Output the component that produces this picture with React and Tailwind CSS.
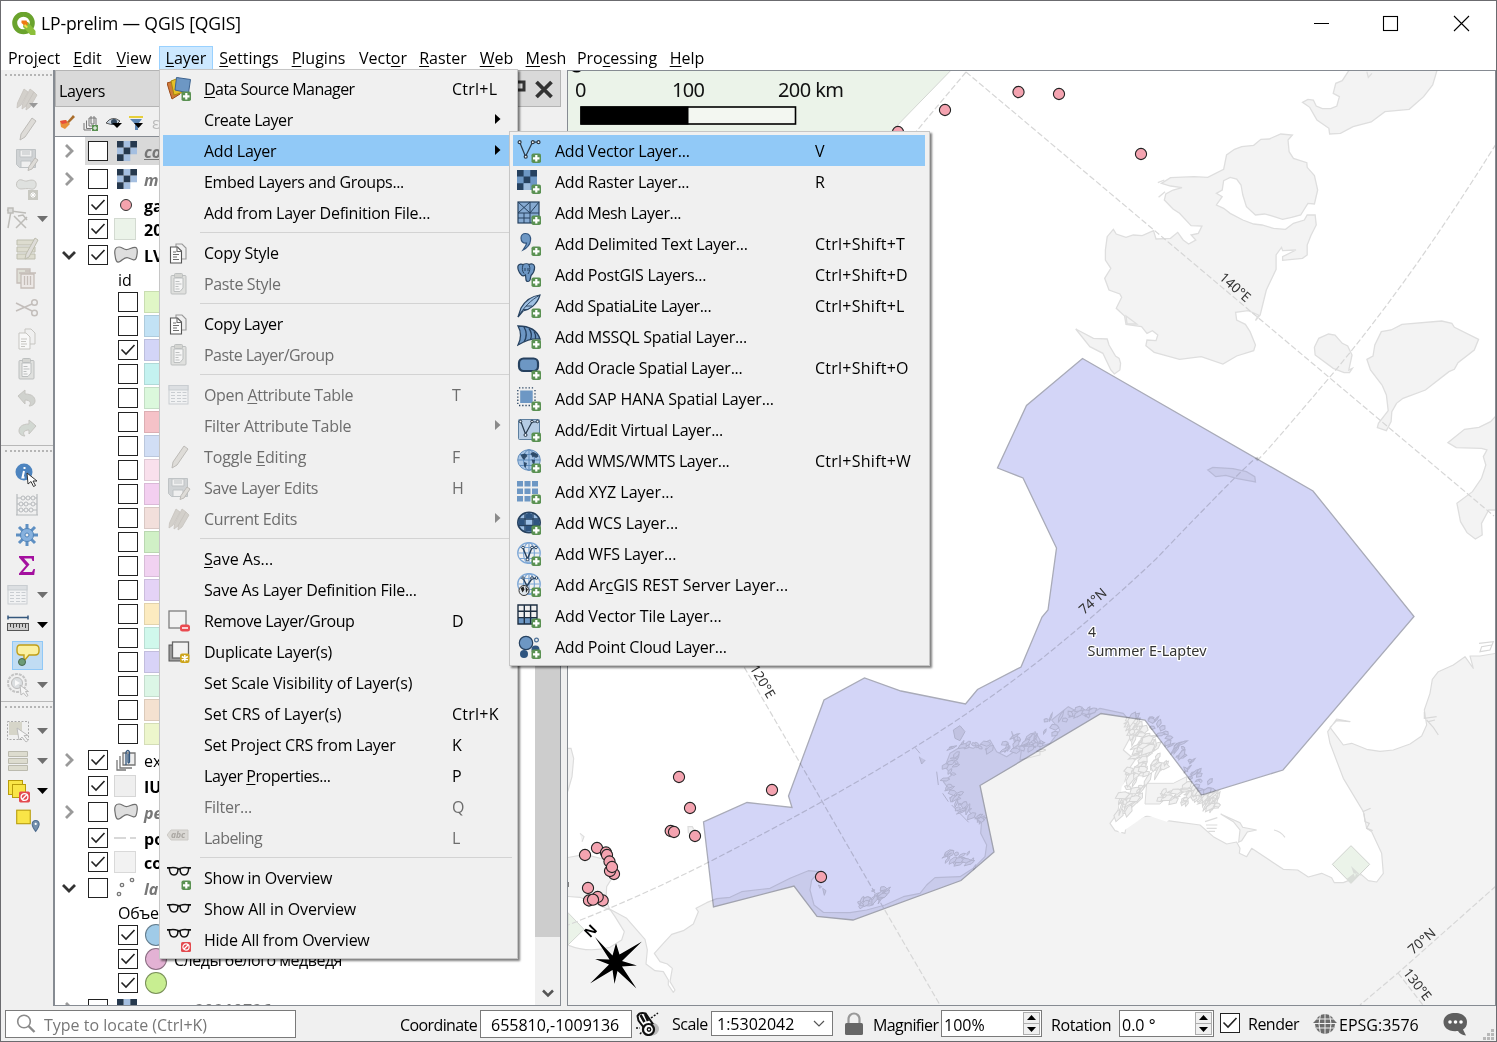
import React from "react";

/* ---------- helpers ---------- */

// "_X" marks the underlined accelerator letter
function Label({ text }) {
  const i = text.indexOf("_");
  if (i < 0) return <span>{text}</span>;
  return (
    <span>
      {text.slice(0, i)}
      <span className="underline decoration-1 underline-offset-2">{text[i + 1]}</span>
      {text.slice(i + 2)}
    </span>
  );
}

function Svg({ size = 24, children, className = "" }) {
  return (
    <svg width={size} height={size} viewBox="0 0 24 24" fill="none" className={"shrink-0 " + className}>
      {children}
    </svg>
  );
}

const Plus = () => (
  <g>
    <rect x="14.500" y="14.500" width="9.500" height="9.500" rx="1.800" fill="#5a9152" />
    <path d="M19.300 16v6.500M16 19.300h6.500" stroke="#fff" strokeWidth="2.200" />
  </g>
);

const NoEntry = ({ x = 15, y = 15, s = 10 }) => (
  <g transform={`translate(${x} ${y}) scale(${s / 10})`}>
    <rect width="10" height="10" rx="1.5" fill="#e34a4f" />
    <circle cx="5" cy="5" r="3.1" stroke="#fff" strokeWidth="1.2" />
    <path d="M3 7l4-4" stroke="#fff" strokeWidth="1.2" />
  </g>
);

/* ---------- icons ---------- */

const B = "#6d97c4";
const D = "#26415f";

const globeLines = (c, w = 1) => (
  <g stroke={c} strokeWidth={w}>
    <ellipse cx="12" cy="11" rx="11.3" ry="10.3" />
    <ellipse cx="12" cy="11" rx="5.5" ry="10.3" />
    <path d="M12 1v20M1 11h22M3 5.5h18M3 16.5h18" />
  </g>
);

const vShape = (c) => (
  <g stroke={c} strokeWidth="1.2">
    <path d="M3 4l5.5 13.5L15.500 3.200h5" />
    <g fill="#f4f4f4">
      <circle cx="2.600" cy="3.200" r="1.500" />
      <circle cx="8.700" cy="17.700" r="1.500" />
      <circle cx="15.800" cy="3.200" r="1.500" />
      <circle cx="21.500" cy="3.200" r="1.500" />
    </g>
  </g>
);

const Glasses = () => (
  <g stroke="#111" strokeWidth="1.500">
    <path d="M0 1.800h4M20 1.800h4" strokeWidth="1.800" />
    <path d="M10.800 3.600q1.200-1.400 2.400 0" strokeWidth="1.800" />
    <path d="M2.300 2Q6.500 .8 10.800 2.400C11.300 6 9.800 9 6.900 9S2.400 6 2.300 2zM21.700 2Q17.500 .8 13.200 2.400C12.700 6 14.200 9 17.100 9S21.600 6 21.700 2z" fill="#f4f4f4" />
  </g>
);

const pencil = (
  <path d="M17 1l4 3L10 20l-5 3 1-6z" fill="#dedcd8" stroke="#bdbbb7" />
);

const icons = {
  dsm: (
    <>
      <path d="M0 6l7-2 6 13-8 5-2-6z" fill="#cf7a3a" stroke="#9c4a18" />
      <path d="M4 4l8-3 5 14-10 3z" fill="#e6c028" stroke="#a98a0c" />
      <path d="M9.500 .5L23.500 2.500l-2 13.500L8 13z" fill={B} stroke="#3d638f" />
      <Plus />
    </>
  ),
  copy: (
    <g stroke="#6c6c6c" strokeWidth="1.1">
      <path d="M9 3h6l4 4v11H9z" fill="#efefef" stroke="#999" />
      <path d="M3.500 6h7l4 4v12h-11z" fill="#fcfcfc" stroke="#555" />
      <path d="M10 6v4.500h4.500M6 11h3M6 13.500h6M6 16h4M6 18.500h6" />
    </g>
  ),
  paste: (
    <g stroke="#bcbfbf">
      <rect x="4" y="3.500" width="15" height="18.500" rx="1" fill="#dfe0de" />
      <path d="M7 6h9v10l-3 3.500H7z" fill="#f5f5f5" />
      <rect x="7.500" y="1.500" width="8" height="4" rx="1" fill="#d4d5d2" />
      <path d="M8.500 9.500h4M8.500 12h6M8.500 14.500h3M8.500 17h4" />
    </g>
  ),
  table: (
    <g stroke="#c9cdd1">
      <rect x="2" y="2.500" width="19" height="18.500" fill="#f1f2f3" />
      <rect x="2" y="2.500" width="19" height="4.500" fill="#dcdfe2" />
      <path d="M4 9.500h4M10 9.500h4M15.500 9.500h4M4 12.500h4M10 12.500h4M15.500 12.500h4M4 15.500h4M10 15.500h4M15.500 15.500h4M4 18.500h4M10 18.500h4M15.500 18.500h4" />
    </g>
  ),
  pencil,
  save: (
    <g stroke="#bfc3c5">
      <path d="M1.500 2.500h19v18h-16l-3-3z" fill="#d0d3d5" />
      <path d="M5 3h12v7H5zM6 14h10v6.500H6z" fill="#f0f0f0" />
      <path d="M7 5h8M7 7h8" />
      <path d="M20 11l3 2-6 9-4 1.500 1-4z" fill="#dedcd8" stroke="#bdbbb7" />
    </g>
  ),
  pencils: (
    <g fill="#d3d0cb" stroke="#c6c3be" strokeWidth=".8">
      <path d="M9 2l4 3-7 13-4 3 .5-5z" />
      <path d="M15 2l4 3-8 14-4 3 .5-5z" />
      <path d="M19 5l3 3-7 12-4 3 .5-5z" />
    </g>
  ),
  remove: (
    <>
      <rect x="2" y="2" width="17" height="17" fill="#f2f2f2" stroke="#7d7d7d" strokeWidth="1.3" />
      <rect x="13" y="15.500" width="10" height="7" rx="2.500" fill="#ea4a50" />
      <path d="M15 19h6" stroke="#fff" strokeWidth="1.500" />
    </>
  ),
  duplicate: (
    <>
      <rect x="2" y="5" width="15" height="16" fill="#9d9d9d" stroke="#555" />
      <rect x="5.500" y="2" width="16" height="16" fill="#f2f2f2" stroke="#666" strokeWidth="1.300" />
      <rect x="13" y="13.500" width="9.500" height="9.500" rx="2" fill="#cda51c" />
      <path d="M17.800 15v6.500M14.800 16.500l6 3.500M14.800 20l6-3.500" stroke="#fff" strokeWidth="1.500" />
    </>
  ),
  abc: (
    <>
      <path d="M0 9l4-5h17v10H4z" fill="#dbd9d5" stroke="#cbc9c5" />
      <text x="4" y="12" fontSize="8.500" fontWeight="700" fontStyle="italic" fill="#aaa7a2" fontFamily="Noto Sans">abc</text>
    </>
  ),
  glassesPlus: <><Glasses /><Plus /></>,
  glasses: <g transform="translate(0 6)"><Glasses /></g>,
  glassesNo: <><Glasses /><NoEntry x={14} y={14} /></>,

  vector: <>{vShape("#2b3a48")}<Plus /></>,
  raster: (
    <>
      <rect width="20" height="20" fill={B} />
      <path d="M0 0h6.600v6.600H0zM13.300 0H20v6.600h-6.700zM6.600 6.600h6.700v6.700H6.600zM0 13.300h6.600V20H0z" fill={D} />
      <path d="M6.600 13.300h6.700V20H6.600z" fill="#9ebcdc" />
      <Plus />
    </>
  ),
  mesh: (
    <>
      <rect x="1" y="1" width="21" height="21" fill="#86aad2" stroke={D} strokeWidth="1.200" />
      <path d="M1 12h21M13 1v11M1 1l12 11M13 1L1 12M22 1l-9 11M7 12v10M13 12v10M1 17h12" stroke={D} />
      <Plus />
    </>
  ),
  comma: (
    <>
      <path d="M4 6c0-3 2-4.500 4.500-4.500 4 0 5.500 3 5 7C13 13 10 16 6 18c2-3 3.500-5 3.500-7C6 11.500 4 9.500 4 6z" fill={B} stroke="#31547e" strokeWidth="1.200" />
      <Plus />
    </>
  ),
  postgis: (
    <>
      <path d="M1 3c1-2.500 4-2 5-1.500 2-1 5-1 6 0 2-1 5-1 5.500 2 .5 4-1.500 7-3.500 9l-1 4.500c-1 2-3.500 2-4 0l-.5-5c-1.500 1-3.500 1.500-4.500-.500C1.500 9 .5 5 1 3z" fill={B} stroke={D} strokeWidth="1.200" />
      <path d="M6 2c-1 3-1 6 1 8.500M12 2c1.500 3 1 6-1 9M8 5v3M11 5v3" stroke={D} />
      <Plus />
    </>
  ),
  feather: (
    <>
      <path d="M23 1C15 2 8 7 4 14l-3 9 5-6c6-1 14-6 17-16z" fill="#9fc0e2" stroke={D} strokeWidth="1.200" />
      <path d="M23 1C14 6 7 13 1 23M9 12h6M6 15.500h5" stroke={D} strokeWidth=".9" />
      <Plus />
    </>
  ),
  mssql: (
    <>
      <path d="M1 1c7 0 18 1 22 13-9-1-15 2-22 6 3-6 4-12 0-19z" fill={B} stroke={D} strokeWidth="1.300" />
      <path d="M7 2c3 5 3 10 0 15M12 3.500c3 4 3 7 1.500 11M17 6.500c2 3 2 5 1.500 7.500" stroke={D} strokeWidth="1.300" />
      <Plus />
    </>
  ),
  oracle: (
    <>
      <rect x="2" y="2.500" width="19" height="12.500" rx="4.500" fill={B} stroke={D} strokeWidth="2.200" />
      <Plus />
    </>
  ),
  hana: (
    <>
      <rect x="3.200" y="3.500" width="12.500" height="12.500" fill={B} />
      <path d="M2 .8h16M2 18.500h14M.8 3v15M18 3v13" stroke={D} strokeWidth="1.300" strokeDasharray="1.300 1.900" />
      <Plus />
    </>
  ),
  virtual: (
    <>
      <rect x="1.500" y="1.500" width="21" height="20" rx="1" fill="#b5cce4" stroke="#5d7f9f" />
      <path d="M4 4l4.500 12L15 4h5" stroke="#26384a" strokeWidth="1.200" />
      <g fill="#e8eef4" stroke="#26384a">
        <circle cx="3.500" cy="3.500" r="1.300" /><circle cx="8.500" cy="17" r="1.500" /><circle cx="15" cy="3.500" r="1.300" /><circle cx="20.500" cy="3.500" r="1.300" />
      </g>
      <Plus />
    </>
  ),
  wms: (
    <>
      <ellipse cx="12" cy="11" rx="11" ry="10" fill="#a7c5e6" />
      {globeLines("#5f8bbb")}
      <path d="M3.500 6l4-1.500 2 1 1 1.500-2 2-1 2-2-1.500zM7 13l3 1-1.500 5L7 17zM13.500 4l3-1 4 2 1 2.500-2.500 1.500-2-1.500-1.500 1zM14.500 10.500l3.500 .5-1 5-1.500-2z" fill={D} opacity=".9" />
      <Plus />
    </>
  ),
  xyz: (
    <>
      <path d="M0 1h6v5.500H0zM7.500 1h6v5.500h-6zM15 1h6v5.500h-6zM0 8.500h6V14H0zM7.500 8.500h6V14h-6zM15 8.500h6V14h-6zM0 16h6v5.500H0zM7.500 16h6v5.500h-6z" fill={B} />
      <Plus />
    </>
  ),
  wcs: (
    <>
      <ellipse cx="12" cy="11.500" rx="11.200" ry="10.200" fill="#9dc0e6" stroke={D} strokeWidth="1.600" />
      <path d="M1.500 8h21M1.500 14.500h21M8 2v19M16 2v19" stroke={D} strokeWidth="1.300" />
      <path d="M8.500 3.500L12 1.500l3.500 2V7.500h-7zM1.500 8.500h6v5.500h-6zM16.500 8.500h6v5.500h-6zM8.500 15h7v5.500h-7z" fill="#2f5580" />
      <Plus />
    </>
  ),
  wfs: (
    <>
      <g>{globeLines("#7da7d6", 1.2)}</g>
      <path d="M6 6l4.500 11L15 5.500h4" stroke={D} strokeWidth="1.400" />
      <g fill="#fff" stroke={D}><circle cx="6" cy="5.500" r="1.300" /><circle cx="10.500" cy="17.500" r="1.300" /><circle cx="15" cy="5.500" r="1.300" /><circle cx="19" cy="5.500" r="1.300" /></g>
      <Plus />
    </>
  ),
  arcgis: (
    <>
      <g>{globeLines("#7da7d6", 1.2)}</g>
      <path d="M6 5l4 8 5-7.500h4" stroke={D} strokeWidth="1.400" />
      <g fill="#fff" stroke={D}><circle cx="6" cy="5" r="1.200" /><circle cx="15" cy="5" r="1.300" /><circle cx="19.500" cy="5" r="1.300" /></g>
      <circle cx="7" cy="17.500" r="5" fill="#dfe6ec" stroke="#333" />
      <path d="M3.500 15l3-1.500 1 3-2 3zM8.500 13.500l2.500 3-2 3.500z" fill="#222" />
      <Plus />
    </>
  ),
  tile: (
    <>
      <path d="M1 14h19v6H1z" fill={B} />
      <path d="M1 1h19v19H1zM1 7.300h19M1 13.600h19M7.300 1v19M13.600 1v19" stroke="#1e2f42" strokeWidth="1.400" />
      <Plus />
    </>
  ),
  cloud: (
    <>
      <circle cx="9" cy="8" r="6.700" fill={B} stroke={D} strokeWidth="1.200" />
      <circle cx="19.500" cy="5" r="1.900" stroke="#4a6f96" strokeWidth="1.200" />
      <circle cx="7" cy="19" r="4" fill="#2f5580" />
      <circle cx="18.500" cy="14.500" r="4" fill="#2f5580" />
      <Plus />
    </>
  ),
};

/* ---------- menus ---------- */

const tracking = {
  a: "tracking-[-0.55px]",
  b: "tracking-[-0.45px]",
  c: "tracking-[-0.36px]",
  d: "tracking-[-0.25px]",
  e: "tracking-[-0.12px]",
  z: "tracking-normal",
};

// [label, shortcut or ">" for a submenu, icon, state, tracking]
const layerMenu = [
  ["_Data Source Manager", "Ctrl+L", "dsm", "", "a"],
  ["Create Layer", ">", null, "", "b"],
  ["Add Layer", ">", null, "hl"],
  ["Embed Layers and Groups...", "", null, "", "c"],
  ["Add from Layer Definition File..."],
  null,
  ["Copy Style", "", "copy"],
  ["Paste Style", "", "paste", "off", "c"],
  null,
  ["Copy Layer", "", "copy", "", "c"],
  ["Paste Layer/Group", "", "paste", "off", "a"],
  null,
  ["Open _Attribute Table", "T", "table", "off", "c"],
  ["Filter Attribute Table", ">", null, "off"],
  ["Toggle _Editing", "F", "pencil", "off", "e"],
  ["Save Layer Edits", "H", "save", "off", "c"],
  ["Current Edits", ">", "pencils", "off", "c"],
  null,
  ["_Save As...", "", null, "", "z"],
  ["Save As Layer Definition File..."],
  ["Remove Layer/Group", "D", "remove", "", "b"],
  ["Duplicate Layer(s)", "", "duplicate"],
  ["Set Scale Visibility of Layer(s)", "", null, "", "e"],
  ["Set CRS of Layer(s)", "Ctrl+K", null, "", "z"],
  ["Set Project CRS from Layer", "K"],
  ["Layer _Properties...", "P", null, "", "b"],
  ["Filter...", "Q", null, "off"],
  ["Labeling", "L", "abc", "off", "a"],
  null,
  ["Show in Overview", "", "glassesPlus"],
  ["Show All in Overview", "", "glasses", "", "e"],
  ["Hide All from Overview", "", "glassesNo"],
];

const addMenu = [
  ["Add Vector Layer...", "V", "vector", "hl"],
  ["Add Raster Layer...", "R", "raster"],
  ["Add Mesh Layer...", "", "mesh", "", "c"],
  ["Add Delimited Text Layer...", "Ctrl+Shift+T", "comma"],
  ["Add PostGIS Layers...", "Ctrl+Shift+D", "postgis"],
  ["Add SpatiaLite Layer...", "Ctrl+Shift+L", "feather", "", "c"],
  ["Add MSSQL Spatial Layer...", "", "mssql"],
  ["Add Oracle Spatial Layer...", "Ctrl+Shift+O", "oracle"],
  ["Add SAP HANA Spatial Layer...", "", "hana", "", "e"],
  ["Add/Edit Virtual Layer...", "", "virtual"],
  ["Add WMS/WMTS Layer...", "Ctrl+Shift+W", "wms", "", "c"],
  ["Add XYZ Layer...", "", "xyz", "", "z"],
  ["Add WCS Layer...", "", "wcs", "", "e"],
  ["Add WFS Layer...", "", "wfs", "", "e"],
  ["Add Ar_cGIS REST Server Layer...", "", "arcgis", "", "z"],
  ["Add Vector Tile Layer...", "", "tile", "", "e"],
  ["Add Point Cloud Layer...", "", "cloud"],
];

function MenuItem({ item, labelWidth, gap }) {
  if (!item) return <div className="ml-[37px] mr-0.5 h-[9px] pt-1"><div className="h-px bg-[#d3d3d3]" /></div>;
  const [text, key, icon, state, track] = item;
  const tone = state === "off" ? "text-[#6d6d6d]" : "text-black";
  return (
    <div className={`flex h-[31px] items-center pl-1 ${tone} ${state === "hl" ? "bg-[#91c9f7]" : ""}`}>
      <Svg>{icon && icons[icon]}</Svg>
      <div className={`${gap} ${labelWidth} shrink-0 whitespace-nowrap ${tracking[track || "d"]}`}><Label text={text} /></div>
      {key === ">" ? (
        <svg width="6" height="10" className="ml-[43px] mb-0.5" viewBox="0 0 6 10">
          <path d="M0 0l5.500 5L0 10z" fill={state === "off" ? "#8a8a8a" : "#000"} />
        </svg>
      ) : (
        <div className="whitespace-nowrap tracking-[0.25px]">{key}</div>
      )}
    </div>
  );
}

function LayerMenu() {
  return (
    <div className="absolute left-[159px] top-[69px] z-10 h-[890px] w-[359px] border border-[#c6c6c6] bg-[#f0f0f0] p-[3px] shadow-[2px_2px_2px_rgba(0,0,0,0.5)]">
      {layerMenu.map((it, i) => <MenuItem key={i} item={it} gap="ml-[13px]" labelWidth="w-[248px]" />)}
    </div>
  );
}

function AddMenu() {
  return (
    <div className="absolute left-[509px] top-[131px] z-20 h-[535px] w-[421px] border border-[#c6c6c6] bg-[#f0f0f0] px-[3px] pt-[3px] pr-1 shadow-[2px_2px_2px_rgba(0,0,0,0.5)]">
      {addMenu.map((it, i) => <MenuItem key={i} item={it} gap="ml-[14px]" labelWidth="w-[260px]" />)}
    </div>
  );
}

/* ---------- title and menu bar ---------- */

function TitleBar() {
  return (
    <div className="flex h-[45px] shrink-0 items-center bg-white pl-[11px]">
      <svg width="24" height="24" viewBox="0 0 24 24" fill="none">
        <circle cx="11.500" cy="11" r="8.800" stroke="#6aa32d" strokeWidth="5" />
        <path d="M12 10h4l7.500 9v4h-5l-7.500-8z" fill="#8cbf3a" />
        <path d="M9.500 8.500h5l1.500 4-3 1.500-3.500-3z" fill="#ee7913" />
        <path d="M13 12l3 3-1.500 1L12 14z" fill="#f4e04a" />
      </svg>
      <div className="ml-[5px] flex-1 text-[17.600px] tracking-[-0.15px]">LP-prelim — QGIS [QGIS]</div>
      <svg width="170" height="20" viewBox="0 0 170 20" fill="none" stroke="#000" strokeWidth="1.100" className="mr-[14px]">
        <path d="M2 9.500h15M142 2l15 15M157 2l-15 15" />
        <rect x="71.500" y="2.500" width="14" height="14" />
      </svg>
    </div>
  );
}

const menuBar = [
  ["Pro_ject", "w-[65px] pl-px"], ["_Edit", "w-[43px]"], ["_View", "w-[50px]"], ["_Layer", "w-[54px]", 1],
  ["_Settings", "w-[72px]"], ["_Plugins", "w-[67px]"], ["Vect_or", "w-[62px]"], ["_Raster", "w-[58px]"],
  ["_Web", "w-[49px]"], ["_Mesh", "w-[50px]"], ["Pro_cessing", "w-[92px]"], ["_Help", "w-[48px]"],
];

function MenuBar() {
  return (
    <div className="flex h-[24px] shrink-0 items-center bg-white">
      {menuBar.map(([t, w, on]) => (
        <div key={t} className={`flex h-full items-center justify-center ${w} ${on ? "border border-[#99d1ff] bg-[#cce8ff]" : ""}`}>
          <Label text={t} />
        </div>
      ))}
    </div>
  );
}

/* ---------- left toolbar ---------- */

const faint = "#c6c5c1";
const Drop = ({ dark }) => (
  <svg width="12" height="6" viewBox="0 0 12 6"><path d="M0 0h11L5.500 6z" fill={dark ? "#000" : "#6f6f6f"} /></svg>
);

const tools1 = [
  <>{icons.pencils}<path d="M14 16h9l-4.500 5z" fill="#999" /></>,
  pencil,
  icons.save,
  <><path d="M2 5c3-5 7 0 10-1s8-2 9 2-2 7-5 6-8 0-10 0-6-2-4-7z" fill="#dfe1df" stroke={faint} /><rect x="13" y="13" width="10" height="10" fill="#c9c9c2" /><path d="M18 15v6M15 18h6M16 16l4 4M20 16l-4 4" stroke="#fff" /></>,
  null,
  <g stroke="#bdbdae"><path d="M2 3h18v5H2zM2 10h18v5H2zM2 17h18v5H2z" fill="#dddccf" /><path d="M20 1l3 2-9 17-4 2 1-5z" fill="#dedcd8" /></g>,
  <g stroke="#c5bdb8" strokeWidth="1.300"><path d="M2 2h13v14H2z" fill="#dfdfd6" /><path d="M6 7h13v14H6z" fill="#ece8e6" /><path d="M4 6h17M9.500 9v9M12.500 9v9M15.500 9v9M10 4h5" /></g>,
  <g stroke="#c3bebb" strokeWidth="1.500"><path d="M1 6l16 8M1 14l16-7" /><circle cx="19.500" cy="5.500" r="2.800" /><circle cx="19.500" cy="16" r="2.800" /></g>,
  <g stroke={faint}><path d="M10 2h6l4 4v11H10z" fill="#f0f0f0" /><path d="M4 6h7l4 4v12H4z" fill="#f8f8f8" /><path d="M6 12h6M6 14.500h5M6 17h6M6 19.500h4" /></g>,
  icons.paste,
  <path d="M3 9l7-6v4c7 0 10 3 10 7 0 3-3 5-6 5 3-3 1-6-4-6v4z" fill="#d0d2ce" stroke={faint} />,
  <path d="M21 9l-7-6v4C7 7 4 10 4 14c0 3 3 5 6 5-3-3-1-6 4-6v4z" fill="#d2d8d2" stroke={faint} />,
];

function Grip() {
  return <div className="ml-1 w-[47px] border-t-2 border-dotted border-[#b5b5b5]" />;
}

function Toolbar() {
  return (
    <div className="flex w-[52px] shrink-0 flex-col bg-[#f0f0f0]">
      <div className="h-[14px] pt-1"><Grip /></div>
      {tools1.map((t, i) => (
        <div key={i} className="flex h-[30px] items-center pl-[14px]">
          {t ? <Svg>{t}</Svg> : (
            <div className="-ml-2.5 flex items-center gap-2">
              <Svg><g stroke="#bdbcb8" strokeWidth="1.500"><path d="M3 21L6 4l15 2M2 3l4 1M9 9l12 12M22 10L11 21" /><rect x="3" y="1" width="5" height="5" fill="#dcdcda" /><path d="M13 9l5-1 4 5" /></g></Svg>
              <Drop />
            </div>
          )}
        </div>
      ))}
      <div className="h-[16px] pt-[1px]"><div className="mb-[4px] h-px bg-[#b8b8b8]" /><Grip /></div>

      <div className="flex h-[30px] items-center pl-[14px]">
        <Svg><circle cx="9" cy="9" r="8.500" fill="#4d84bf" /><path d="M9.500 4v2M9 8l-1.500 6.500h2" stroke="#fff" strokeWidth="2" /><path d="M12 10l1 11 3-2.500 2.500 5 2-1-2.500-4.500h4z" fill="#fff" stroke="#333" /></Svg>
      </div>
      <div className="flex h-[30px] items-center pl-[14px]">
        <Svg><path d="M2 1v21M22 1v21M2 5h20M2 11h20M2 17h20M1 22h22" stroke="#b6b9bc" strokeWidth="1.200" /><g fill="#f0f0f0" stroke="#b6b9bc"><circle cx="8" cy="5" r="2" /><circle cx="13" cy="5" r="2" /><circle cx="18" cy="5" r="2" /><circle cx="6" cy="11" r="2" /><circle cx="11" cy="11" r="2" /><circle cx="18" cy="11" r="2" /><circle cx="6" cy="17" r="2" /><circle cx="11" cy="17" r="2" /><circle cx="16" cy="17" r="2" /></g></Svg>
      </div>
      <div className="flex h-[30px] items-center pl-[14px]">
        <Svg><path d="M12 1v22M1 12h22M4 4l16 16M20 4L4 20" stroke="#5e8fc2" strokeWidth="3" /><circle cx="12" cy="12" r="6.500" fill="#86b1de" stroke="#4f83b8" /><circle cx="12" cy="12" r="2" fill="#f0f0f0" stroke="#4f83b8" /></Svg>
      </div>
      <div className="flex h-[30px] items-center pl-[14px]">
        <Svg><path d="M4 3h15v5h-1.500l-1-2.500H9l5.500 6L8 19h9l1.500-3H20l-.8 6H4v-1.500l7-8L4 4.500z" fill="#a4109f" /></Svg>
      </div>
      <div className="flex h-[30px] items-center gap-[7px] pl-[5px]"><Svg>{icons.table}</Svg><Drop /></div>
      <div className="flex h-[30px] items-center gap-[7px] pl-[5px]">
        <Svg><path d="M2 4.500h20M2 2.500v4M22 2.500v4" stroke="#34577d" strokeWidth="1.500" /><rect x="1.500" y="10.500" width="21" height="7" fill="#cfcfcf" stroke="#555" /><path d="M4.500 11v3M7.500 11v4M10.500 11v3M13.500 11v4M16.500 11v3M19.500 11v4" stroke="#444" /></Svg>
        <Drop dark />
      </div>
      <div className="flex h-[30px] items-center pl-[11px]">
        <div className="flex h-[29px] w-[31px] items-center justify-center border border-[#90c8f6] bg-[#c0dcf3]">
          <Svg><path d="M4 2h15q4 0 4 4v2q0 4-4 4h-6l-5 6V12H5Q1 12 1 8V6q0-4 3-4z" fill="#fbf0a0" stroke="#c19e17" strokeWidth="1.400" /><circle cx="6" cy="19" r="3.500" fill="#6d9c77" stroke="#47694f" /></Svg>
        </div>
      </div>
      <div className="flex h-[30px] items-center gap-[7px] pl-[5px]">
        <Svg><circle cx="11" cy="10" r="9" stroke="#c4c4c4" strokeWidth="2" strokeDasharray="3 1" /><circle cx="11" cy="10" r="5.500" fill="#dcdfe1" stroke="#bbb" /><path d="M9 7l5 3-5 3z" fill="#fafafa" /><path d="M14 12l1 10 2.500-2 3 3.500 1.500-1-2.500-4h3z" fill="#f5f5f5" stroke="#bbb" /></Svg>
        <Drop />
      </div>
      <div className="h-[16px] pt-px"><div className="mb-[4px] h-px bg-[#b8b8b8]" /><Grip /></div>
      <div className="flex h-[30px] items-center gap-[7px] pl-[5px]">
        <Svg><path d="M1.500 2.500h21v18h-21z" stroke="#aaa" strokeDasharray="2 1.500" /><rect x="3" y="3" width="13" height="13" fill="#d6d5c9" /><path d="M11 9l2 12 3-3 4 5 2-1.500-4-5h4z" fill="#f5f5f5" stroke="#bbb" /></Svg>
        <Drop />
      </div>
      <div className="flex h-[30px] items-center gap-[7px] pl-[5px]">
        <Svg><g fill="#dddccf" stroke="#bbbaae"><path d="M2.500 2.500h19v5h-19zM2.500 9.500h19v5h-19zM2.500 16.500h19v5h-19z" /></g></Svg>
        <Drop />
      </div>
      <div className="flex h-[30px] items-center gap-[7px] pl-[5px]">
        <Svg><g fill="#f9e547" stroke="#b89c0b"><rect x="2.500" y="1.500" width="14" height="14" /><rect x="6.500" y="5.500" width="13" height="13" /></g><NoEntry x={13} y={12.500} s={11} /></Svg>
        <Drop dark />
      </div>
      <div className="flex h-[30px] items-center pl-[13px]">
        <Svg size={26}><rect x="2.500" y="2" width="12.500" height="12.500" fill="#f9e547" stroke="#b89c0b" /><path d="M20 11.500a3.200 3.200 0 0 1 3.200 3.500c0 2.500-3.200 6.500-3.200 6.500s-3.200-4-3.200-6.500a3.200 3.200 0 0 1 3.200-3.500z" fill="#7590ad" stroke="#4f6d8f" /><circle cx="20" cy="14.700" r="1" fill="#fff" /></Svg>
      </div>
    </div>
  );
}

/* ---------- layers panel ---------- */

function Check({ on }) {
  return (
    <div className="h-5 w-5 shrink-0 border border-[#222] bg-white">
      {on ? <svg width="18" height="18" viewBox="0 0 18 18" fill="none"><path d="M2.500 8.500l4.500 4.500 8.500-9" stroke="#222" strokeWidth="1.600" /></svg> : null}
    </div>
  );
}

const miniRaster = (
  <svg width="20" height="20" viewBox="0 0 20 20">
    <path d="M6.600 0h6.700v6.600H6.600zM0 6.600h6.600v6.700H0zM13.300 6.600H20v6.700h-6.700zM6.600 13.300h6.700V20H6.600z" fill="#a5bfe0" />
    <path d="M0 0h6.600v6.600H0zM13.300 0H20v6.600h-6.700zM6.600 6.600h6.700v6.700H6.600zM0 13.300h6.600V20H0z" fill="#26394e" />
  </svg>
);
const blob = (
  <svg width="24" height="18" viewBox="0 0 24 18"><path d="M1 9C0 3 2 1 5 1s5 3 8 2.500S21 0 22.500 2s.5 8-.5 10.500-4 1-7.500-.5-5 1.500-8.500 3.500S1.500 14 1 9z" fill="#dedede" stroke="#6e6e6e" strokeWidth="1.200" /></svg>
);
const swatch = (c) => <div className={`h-[22px] w-[22px] border border-black/10 ${c}`} />;

const rows = [
  ["h-7", "r", 0, miniRaster, "co", "it ul"],
  ["h-7", "r", 0, miniRaster, "ma", "it"],
  ["h-6", "", 1, <div className="ml-[6px] h-3 w-3 rounded-full border border-[#333] bg-[#f4a3ad]" />, "ga", "b"],
  ["h-6", "", 1, swatch("bg-[#ebf3e9]"), "20", "b"],
  ["h-7", "d", 1, blob, "LV", "b"],
];

const rows2 = [
  ["h-7", "r", 1, <svg width="20" height="22" viewBox="0 0 20 22" className="ml-0.5" fill="none" stroke="#777" strokeWidth="1.300"><path d="M7 4h12v12H7z" fill="#eee" /><path d="M4 7v12h12M1 11v10h9" /><path d="M10 16V3q2-3 3.500 0v10q-1 2-1.500 0V5" stroke="#34577d" /></svg>, "ex", ""],
  ["h-6", "", 1, swatch("bg-[#efefef]"), "IU", "b"],
  ["h-7", "r", 0, blob, "pe", "it"],
  ["h-6", "", 1, <div className="flex gap-1"><div className="h-[2px] w-3 bg-[#d8d8d8]" /><div className="h-[2px] w-[6px] bg-[#d8d8d8]" /></div>, "po", "b"],
  ["h-6", "", 1, swatch("bg-[#f2f2f2]"), "co", "b"],
  ["h-7", "d", 0, <svg width="22" height="22" viewBox="0 0 22 22" fill="none" stroke="#777" strokeWidth="1.300"><circle cx="5" cy="17" r="1.700" /><circle cx="8" cy="8" r="1.700" /><circle cx="18" cy="3" r="1.700" /></svg>, "la", "it"],
];

const swatches = [
  "bg-[#e0f6c6]", "bg-[#c2e2f5]", "bg-[#d3d5f7]", "bg-[#c4f2f0]", "bg-[#dbf8dc]", "bg-[#f5c2c8]", "bg-[#d1def5]",
  "bg-[#f9e0ec]", "bg-[#f3cff0]", "bg-[#f2dfdb]", "bg-[#d0f0c6]", "bg-[#f1d2f1]", "bg-[#e4d3f6]", "bg-[#fcebc0]",
  "bg-[#d0f8ec]", "bg-[#d8d3f7]", "bg-[#dcf6e6]", "bg-[#f4e1d0]", "bg-[#edf6cc]",
];

const nameTone = {
  "": "",
  b: "font-bold",
  it: "font-bold italic text-[#777]",
  "it ul": "font-bold italic text-[#777] underline",
  last: "ml-[50px] font-bold italic tracking-[0.8px] text-[#777]",
};

function TreeRow({ row }) {
  const [h, exp, on, icon, name, style] = row;
  return (
    <div className={`flex ${h} shrink-0 items-center`}>
      <div className="flex w-[33px] items-center pl-[7px]">
        {exp && (
          <svg width="14" height="14" viewBox="0 0 14 14" fill="none" strokeWidth="2.800" className={exp === "d" ? "" : "ml-px"}>
            {exp === "r" ? <path d="M3 1l6 6-6 6" stroke="#9a9a9a" /> : <path d="M1 4l6 6 6-6" stroke="#333" />}
          </svg>
        )}
      </div>
      <div className={`flex h-full flex-1 items-center ${style === "it ul" ? "-ml-[3px] bg-[#d9d9d9] pl-[3px]" : ""}`}>
        <Check on={on} />
        <div className="ml-[6px] flex w-[30px] items-center">{icon && <div className={icon === miniRaster ? "ml-[3px]" : ""}>{icon}</div>}</div>
        <div className={`pt-0.5 ${nameTone[style]}`}>{name}</div>
      </div>
    </div>
  );
}

function LayersPanel() {
  return (
    <div className="flex w-[508px] shrink-0 flex-col border-l-2 border-[#868b92] bg-[#f0f0f0]">
      <div className="flex h-[37px] shrink-0 items-center border border-[#b4b4b4] bg-[#d9d9d9] pl-[3px] pr-[6px]">
        <div className="flex-1 pt-1 tracking-[-0.4px]">Layers</div>
        <svg width="44" height="20" viewBox="0 0 44 20" fill="none" stroke="#333">
          <path d="M4 3h10v8H4z" strokeWidth="3" />
          <path d="M26.500 3l15 15M41.500 3l-15 15" strokeWidth="3.800" />
        </svg>
      </div>
      <div className="flex h-[29px] shrink-0 items-center gap-[8px] pl-[5px] pt-0.5">
        <svg width="15" height="15" viewBox="0 0 15 15"><path d="M0 6l6-1 4 4-5 5-4-2z" fill="#e8923a" /><path d="M0 6l6-1 1 3-5 1z" fill="#e84f3a" /><path d="M7 7l6-7 2 2-6 6z" fill="#a96d2b" /></svg>
        <svg width="16" height="16" viewBox="0 0 16 16" fill="none" stroke="#777"><path d="M6 3h7v8H6zM3.500 5.500v8H11M1 8v7h7M8 1v8h3V1" /><rect x="9" y="10" width="6" height="6" fill="#5a9152" stroke="none" /><path d="M12 11v4M10 13h4" stroke="#fff" /></svg>
        <svg width="17" height="14" viewBox="0 0 17 14" className="-ml-px"><path d="M0 7q6-8 14-2-4 6-14 2z" fill="#c6d2de" stroke="#555" /><circle cx="8" cy="6" r="3" fill="#34495e" /><path d="M6 7h10l-5 5z" /></svg>
        <svg width="15" height="16" viewBox="0 0 15 16" className="-ml-0.5"><path d="M0 1h14v2H0z" fill="#e6cf3a" /><path d="M1 4h12L9 9v6H6V9z" fill="#5d86b4" /><path d="M5 8h9l-4.500 5z" /></svg>
        <div className="text-[#bbb]">ε</div>
      </div>
      <div className="flex min-h-0 flex-1 border-r border-t border-b border-[#868b92] bg-white">
        <div className="flex flex-1 flex-col overflow-hidden">
          {rows.map((r, i) => <TreeRow key={i} row={r} />)}
          <div className="flex h-[21px] shrink-0 items-center pl-[63px]">id</div>
          {swatches.map((c, i) => (
            <div key={i} className="flex h-6 shrink-0 items-center pl-[63px] gap-[6px]">
              <Check on={i === 2} />{swatch(c)}
            </div>
          ))}
          {rows2.map((r, i) => <TreeRow key={i} row={r} />)}
          <div className="flex h-[21px] shrink-0 items-center pl-[63px] tracking-[-0.3px]">Объекты</div>
          {["bg-[#a0cbe8]", "bg-[#e3b2d4]", "bg-[#c8ee91]"].map((c, i) => (
            <div key={c} className="flex h-6 shrink-0 items-center pl-[63px]">
              <Check on />
              <div className={`ml-[7px] h-[22px] w-[22px] rounded-full border border-black/40 ${c}`} />
              {i === 1 && <div className="ml-[7px] pt-0.5 tracking-[-0.5px]">Следы белого медведя</div>}
            </div>
          ))}
          <TreeRow row={["h-7", "r", 0, miniRaster, "20210726", "last"]} />
        </div>
        <div className="flex w-[25px] flex-col bg-[#f0f0f0]">
          <div className="h-[800px] bg-[#cdcdcd]" />
          <div className="flex flex-1 items-end justify-center pb-[6px]">
            <svg width="12" height="10" viewBox="0 0 12 10" fill="none"><path d="M1 1.500l5 5 5-5" stroke="#555" strokeWidth="2.500" /></svg>
          </div>
        </div>
      </div>
    </div>
  );
}

/* ---------- map canvas ---------- */

const points = [
  [1018.500, 92], [1059, 94], [945, 110], [1141, 154], [898, 132],
  [679, 777], [690, 808], [772, 790], [670.700, 831], [674, 832], [695, 836], [821, 877],
  [597, 848], [585, 855], [606, 852.500], [607, 855], [609.500, 861.500], [614, 874], [610, 871], [612, 867],
  [588, 888], [589, 900.500], [602.700, 900.500], [597.700, 897], [593, 899.700],
];

// deterministic scatter of small channel islands
function islands(list, n, seed, k0 = 1) {
  let s = seed;
  const rnd = () => { s = (s * 16807) % 2147483647; return s / 2147483647; };
  const out = [];
  for (let i = 0; i < n; i++) {
    const t = rnd() * (list.length - 1);
    const k = Math.floor(t), f = t - k;
    const [x1, y1, w1] = list[k], [x2, y2, w2] = list[k + 1];
    const w = w1 + (w2 - w1) * f;
    const x = x1 + (x2 - x1) * f + (rnd() - 0.5) * w;
    const y = y1 + (y2 - y1) * f + (rnd() - 0.5) * w * 0.7;
    const a = (4 + rnd() * 14) * k0, b = (2 + rnd() * 7) * k0;
    const r = -75 + rnd() * 75;
    out.push(<path key={i} d={`M${-a} 0L${-a / 3} ${-b}L${a * 0.6} ${-b * 0.6}L${a} ${b * 0.3}L${a * 0.2} ${b}Z`} transform={`translate(${x.toFixed(1)} ${y.toFixed(1)}) rotate(${r.toFixed(0)})`} />);
  }
  return out;
}

const coast =
  "M0 1100L0 840L24 855C60 870 100 875 150 862L185 840L193 815L165 770L150 748L200 775L255 838L262 870L258 912L285 932L310 935L325 960L325 975L340 997L345 990L330 965L337 925L322 912L300 905L283 880L310 850L335 823L370 812L400 792L415 755L408 745L440 728L470 716L510 712L545 695L630 685L690 655L745 632L778 635L755 660L750 690L762 735L790 757L870 758L920 750L975 735L1030 710L1080 700L1100 675L1125 653L1200 650L1240 625L1275 590L1280 555L1262 520L1265 480L1240 470L1220 445L1195 430L1180 405L1150 365L1175 345L1155 320L1170 280L1195 265L1205 255L1240 265L1290 240L1310 275L1340 290L1370 270L1355 215L1375 260L1420 245L1425 215L1440 240L1440 285L1380 300L1385 265L1420 220L1440 260L1470 250L1500 210L1475 180L1525 140L1580 170L1620 145L1690 160L1715 190L1720 215L1690 270L1725 300L1705 330L1690 380L1672 460L1650 490L1665 512L1695 520L1698 500L1750 470L1810 465L1822 482L1920 495L1960 530L2000 552L2030 546L2040 565L2038 580L2060 590L2075 565L2170 628L2213 630L2245 651L2285 640L2315 653L2323 668L2350 668L2365 662L2385 640L2373 620L2400 640L2425 662L2450 666L2470 640L2465 580L2435 515L2420 505L2410 455L2350 355L2310 250L2303 215L2330 177L2370 185L2330 182L2310 202L2335 235L2350 255L2375 250L2420 268L2460 274L2500 270L2550 252L2585 228L2600 195L2593 150L2610 100L2617 58L2635 35L2680 15L2715 -10L2740 25L2730 -12L2760 -12L2820 -22L2820 1100Z";

function MapCanvas() {
  const land = { fill: "#f3f3f3", stroke: "#dedede", strokeWidth: 1.3, vectorEffect: "non-scaling-stroke" };
  return (
    <svg width="928" height="934" viewBox="568 71 928 934" className="block [font-stretch:100%]" fontFamily="'Noto Sans', sans-serif">
      <rect x="568" y="71" width="928" height="934" fill="#fff" />
      {/* protected areas */}
      <g fill="#ebf3e9" stroke="#d3d6d2">
        <path d="M560 60H961L885 138V300H560z" />
      </g>
      <g transform="translate(560 660) scale(.33333)">
        <path d={coast} fill="#f3f3f3" stroke="#dcdcdc" strokeWidth="3.500" strokeLinejoin="round" />
        <path d="M0 597L75 583L140 600L165 640L140 680L138 720L150 750L60 712L0 708Z" fill="#f3f3f3" stroke="#dcdcdc" strokeWidth="3.500" />
        <path d="M0 265H33L41 295L36 350L24 392L0 440M60 520L72 530L66 545M385 520L384 500L397 500L405 515" fill="#f3f3f3" stroke="#dcdcdc" strokeWidth="3.500" />
        <path d="M24 758L72 808L24 855z" fill="#ebf3e9" stroke="#d3d6d2" strokeWidth="3" />
        <path d="M1180 210L1200 197L1215 215L1200 242L1185 235ZM1065 262L1080 280M1078 290L1085 312L1096 300M1130 335L1135 375M1148 400L1165 425M1175 435L1226 487M775 675L785 680L780 685ZM788 685L798 692L793 706Z" fill="#e9e9e9" stroke="#d4d4d4" strokeWidth="3" />
        <g fill="#efefef" stroke="#d3d3d3" strokeWidth="2.600">
          {islands([[1190, 270, 40], [1160, 350, 40], [1200, 430, 40], [1262, 490, 30]], 36, 77)}
          {islands([[1160, 590, 30], [1200, 590, 50], [1250, 620, 40]], 18, 12)}
          {islands([[900, 735, 20], [950, 705, 50], [980, 695, 30]], 26, 5)}
          {islands([[1205, 255, 12], [1300, 260, 30], [1400, 260, 40], [1440, 260, 40]], 26, 19)}
        </g>
      </g>
      <g transform="translate(1000 640) scale(.33333)">
        {/* river channels of the delta */}
        <path d="M385 235L440 245L600 460L560 500L500 545L440 525L360 580L335 550L355 520L365 440L410 370L400 280Z" fill="#fff" />
        <path d="M662 522L720 548L728 562L770 570L742 576L725 602L716 606L720 570L700 545Z" fill="#f3f3f3" stroke="#dcdcdc" strokeWidth="3.500" />
        <path d="M440 430L520 430L560 410L560 440L500 470L480 492L435 492Z" fill="#f3f3f3" stroke="#dcdcdc" strokeWidth="3" />
        <path d="M822 570Q842 574 855 592M615 545L652 533M618 555H652M620 565H650M625 574H645" fill="none" stroke="#dcdcdc" strokeWidth="3.500" />
        <path d="M1273 215V235L1310 230M1280 240L1300 262L1315 285M1285 245L1305 240M1088 515L1112 505M1092 520L1095 545L1108 550L1100 565L1118 572M1437 10L1480 5L1470 30L1440 35L1445 20L1475 15" fill="none" stroke="#d8d8d8" strokeWidth="3.500" />
        <g fill="#f1f1f1" stroke="#d6d6d6" strokeWidth="3">
          {islands([[395, 240, 20], [430, 300, 60], [470, 370, 110]], 62, 31, 1.5)}
          {islands([[430, 370, 60], [400, 450, 60], [375, 520, 45]], 44, 8, 1.4)}
          {islands([[500, 470, 40], [560, 460, 70], [610, 480, 90], [650, 480, 40]], 70, 99, 1.2)}
          {islands([[460, 240, 30], [520, 310, 50], [560, 380, 40], [620, 430, 60]], 34, 40)}
          {islands([[20, 320, 60], [110, 300, 60], [170, 240, 40], [230, 215, 40], [300, 215, 30]], 28, 3, 1.1)}
        </g>
        <path d="M1053 617L1109 673L1053 730L997 673z" fill="#ebf3e9" stroke="#cfd2ce" strokeWidth="3" />
        <path d="M1053 678L1085 708L1068 700L1065 712ZM1053 730L1078 705L1062 700L1040 717" fill="#d9ddd8" />
      </g>
      {/* islands, north-east */}
      <g transform="translate(930 60) scale(.36164 .33333)">
        <path {...land} d="M1165 20L1140 62L1122 70L1115 100L1132 110L1125 138L1108 146L1085 146L1068 138L1060 120L1045 118L1030 127L1050 142L1070 180L1103 205L1105 222L1135 220L1170 200L1220 186L1258 155L1325 148L1365 110L1390 75L1405 20Z" />
        <path {...land} d="M1208 35L1212 52L1222 40" />
        <path {...land} d="M507 508L515 522L542 532L562 525L587 527L618 512L625 537L665 535L685 517L700 540L715 552L735 540L722 525L742 520L752 498L722 497L690 460L672 447L648 420L652 402L672 390L697 383L665 378L640 370L665 353L730 350L768 352L812 328L820 285L842 268L862 260L895 256L915 238L938 237L970 222L1002 225L990 240L993 275L1005 295L1042 308L1043 322L1063 347L1072 390L1063 432L1045 430L1025 465L1000 472L975 478L945 468L925 462L900 465L875 440L865 405L860 375L848 357L830 352L812 362L808 390L792 400L808 410L792 435L812 445L830 460L865 480L895 492L918 495L950 505L983 508L1005 490L1035 480L1043 465L1065 465L1068 495L1053 527L1043 555L1043 585L1030 595L975 601L975 590L1012 570L975 572L972 562L957 585L957 628L930 690L913 765L900 782L908 765L880 752L845 757L848 780L872 793L885 815L900 855L895 872L848 888L810 912L750 890L690 898L620 877L597 857L600 840L625 842L630 825L615 812L600 820L585 800L542 793L538 768L515 745L530 712L525 702L495 690L483 655L500 625L485 600L485 570L490 530Z" />
        <path {...land} d="M542 768L572 792L545 792ZM630 368L648 360M632 412L650 395" />
        <path {...land} d="M403 807L452 835L490 837L495 855L513 888L523 895L527 910L525 930L510 942L500 930L478 880L442 860Z" />
        <path {...land} d="M1063 862L1075 835L1102 822L1120 825L1140 850L1155 858L1167 885L1158 930L1168 925L1160 938L1145 938L1115 925L1065 885Z" />
        <path {...land} d="M1208 898L1225 888L1230 855L1248 815L1275 810L1305 793L1415 783L1443 790L1450 802L1517 838L1505 870L1460 908L1450 928L1435 935L1370 990L1308 1015L1290 1030L1277 1055L1275 1085L1262 1112L1237 1103L1240 1090L1267 1052L1262 1005L1250 975L1218 930Z" />
        <path {...land} d="M1580 1050L1550 1085L1518 1102L1478 1108L1432 1148L1455 1163L1525 1165L1540 1170L1530 1190L1537 1215L1525 1255L1500 1295L1457 1330L1467 1385L1485 1418L1508 1437L1527 1425L1525 1390L1545 1350L1580 1350Z" />
        <path {...land} d="M768 1230L782 1222L838 1226L875 1235L898 1250L900 1266L880 1262L850 1256L818 1246L790 1250Z" />
      </g>
      {/* graticule */}
      <g fill="none" stroke="#d6d6d6" strokeWidth="1.200" strokeDasharray="6 2.500">
        <path d="M966 72L1494 516" />
        <path d="M966 72L930 115L880 175" />
        <path d="M1496 144Q1410 282 1329 378T1257 459T1156 559Q1100 612 1040 660Q980 707 915 747Q830 800 707 863Q640 897 568 925" />
        <path d="M740 660L800 763L823 803L883 907L940 1005" />
        <path d="M1496 886L1398 973L1360 1005M1398 973L1423 1005" />
      </g>
      {/* selected region */}
      <path className="mix-blend-multiply" fill="#d3d5f7" stroke="#a9abb8" strokeWidth="1.300" d="M1082.500 358.500L1313 491L1414 616.500L1283 770L1201.500 795L1145 720L1101 713.500L980 785.500L994 852L961 880.500L853 920L817 916.500L794 886L713.500 907L703.500 822L747 802.500L792 807.500L788.500 796L824 700L864.500 678L901 691L965.500 704L977.500 689.500L1021 667L1042 617L1048 610L1056.500 548L1023 478L997.500 468L1026.500 405.500Z" />
      {/* observations */}
      <g fill="#f4a3b0" stroke="#222" strokeWidth="1.100">
        {points.map(([x, y], i) => <circle key={i} cx={x} cy={y} r="5.600" />)}
        <path d="M568 882v5" />
      </g>
      {/* labels */}
      <g fill="#333" fontSize="13.500">
        <text transform="translate(1218.500 278.500) rotate(42)">140°E</text>
        <text transform="translate(749.500 668) rotate(60)">120°E</text>
        <text transform="translate(1084 615) rotate(-41)">74°N</text>
        <text transform="translate(1413 955) rotate(-41)">70°N</text>
        <text transform="translate(1402.500 973) rotate(52)">130°E</text>
        <g stroke="#fff" strokeWidth="2.500" strokeLinejoin="round" paintOrder="stroke">
          <text x="1088" y="637" fontSize="14">4</text>
          <text x="1087.500" y="656" fontSize="14" textLength="119" lengthAdjust="spacingAndGlyphs">Summer E-Laptev</text>
        </g>
      </g>
      {/* scale bar */}
      <g>
        <rect x="581" y="107" width="214.500" height="17" fill="#f3f7f1" stroke="#000" strokeWidth="1.600" />
        <rect x="580.500" y="106.500" width="108" height="18" />
        <g fontSize="20" fill="#111" className="[font-stretch:90%]">
          <text x="575" y="97" textLength="12">0</text>
          <text x="672" y="97" textLength="33">100</text>
          <text x="778" y="97" textLength="66">200 km</text>
        </g>
        <path d="M572 71q5 3 9 0z" />
      </g>
      {/* north arrow */}
      <path stroke="#fff" strokeWidth="1" paintOrder="stroke" d="M595 937L612.500 955.500L616 943L619.500 954.500L642 941.500L622 961L637 965.500L622 966.500L636.500 988.500L617.500 971L614.500 984L612.500 970L590 983.500L609 964.500L595 959L609.500 959.500Z" />
      <text transform="translate(590 938.500) rotate(-45)" fontSize="14" fontWeight="700">N</text>
    </svg>
  );
}

/* ---------- status bar ---------- */

function Spin({ value, className }) {
  return (
    <div className={`flex h-[27px] items-center border border-[#7a7a7a] bg-white pl-[2px] ${className}`}>
      <div className="flex-1 pt-0.5">{value}</div>
      <div className="mr-px flex h-[23px] w-[17px] flex-col items-center justify-around border border-[#adadad] bg-[#f0f0f0]">
        <svg width="9" height="5" viewBox="0 0 9 5"><path d="M0 5h9L4.500 0z" /></svg>
        <div className="h-px w-full bg-[#adadad]" />
        <svg width="9" height="5" viewBox="0 0 9 5"><path d="M0 0h9L4.500 5z" /></svg>
      </div>
    </div>
  );
}

function StatusBar() {
  return (
    <div className="flex h-[35px] shrink-0 items-center bg-[#f0f0f0] pl-[4px]">
      <div className="flex h-7 w-[291px] items-center border border-[#7a7a7a] bg-white pl-[10px] text-[#777]">
        <svg width="20" height="20" viewBox="0 0 20 20" fill="none" stroke="#8a8a8a"><circle cx="8" cy="7.500" r="6.300" strokeWidth="1.600" /><path d="M12.500 12l6 6" strokeWidth="2.400" /></svg>
        <div className="ml-[8px] pt-0.5">Type to locate (Ctrl+K)</div>
      </div>
      <div className="ml-[104px] w-[80px] shrink-0 pt-0.5 tracking-[-0.6px]">Coordinate</div>
      <div className="flex h-7 w-[152px] items-center border border-[#7a7a7a] bg-white pl-[10px] pt-0.5">655810,-1009136</div>
      <svg width="24" height="24" viewBox="0 0 24 24" className="ml-[4px]" fill="none" stroke="#111">
        <ellipse cx="16" cy="17" rx="7" ry="6.500" fill="#bbb" stroke="none" />
        <path d="M1.500 4q2-4 8-2.500l7 10-8 5-6-8z" fill="#fff" strokeWidth="2" />
        <path d="M4.500 3l4 7M9 2l3 7" strokeWidth="2.600" />
        <circle cx="12.500" cy="17.500" r="5.500" fill="#fff" strokeWidth="2.200" />
        <circle cx="13" cy="17.500" r="1.700" strokeWidth="1.400" />
        <path d="M0 16h4M4 22l3-3M15 6l7-5" strokeWidth="1.500" strokeDasharray="2 1.500" />
      </svg>
      <div className="ml-[12px] w-[39px] shrink-0 tracking-[-0.5px]">Scale</div>
      <div className="flex h-[25px] w-[122px] items-center justify-between border border-[#7a7a7a] bg-white pl-[5px] pr-[7px]">
        1:5302042
        <svg width="12" height="8" viewBox="0 0 12 8" fill="none"><path d="M1 1l5 5 5-5" stroke="#555" strokeWidth="1.200" /></svg>
      </div>
      <svg width="18" height="23" viewBox="0 0 18 23" className="ml-[12px]" fill="none"><path d="M3.500 12V7a5.500 5.500 0 0 1 11 0v5" stroke="#999" strokeWidth="2.200" /><rect y="11" width="18" height="12" rx="1.500" fill="#666" /></svg>
      <div className="ml-[10px] w-[68px] shrink-0 pt-0.5 tracking-[-0.6px]">Magnifier</div>
      <Spin value="100%" className="w-[101px]" />
      <div className="ml-[9px] w-[68px] shrink-0 pt-0.5 tracking-[-0.4px]">Rotation</div>
      <Spin value="0.0 °" className="w-[95px]" />
      <div className="ml-[6px] mb-0.5"><Check on /></div>
      <div className="ml-[8px] w-[65px] shrink-0 tracking-[-0.5px]">Render</div>
      <svg width="24" height="22" viewBox="0 0 24 22" fill="none" stroke="#f0f0f0"><circle cx="12" cy="11" r="10" fill="#6b6b6b" stroke="none" /><path d="M0 10l4-4h16l4 4z" fill="#6b6b6b" stroke="none" /><path d="M3 6h18M1 10.500h22M3 15h18M12 1v20M7.500 1q-3 10 0 20M16.500 1q3 10 0 20" /></svg>
      <div className="ml-[2px] w-[104px] pt-0.5">EPSG:3576</div>
      <svg width="25" height="24" viewBox="0 0 25 24"><path d="M12 1c7 0 12 3.500 12 9 0 4-1.500 6-4 7.500l3 6c-4-.5-6.500-2-8-4.500C5 20 .5 15.500.5 10S5 1 12 1z" fill="#5f5f5f" /><circle cx="7" cy="10" r="1.800" fill="#fff" /><circle cx="12.500" cy="10" r="1.800" fill="#fff" /><circle cx="18" cy="10" r="1.800" fill="#fff" /></svg>
      <svg width="11" height="11" viewBox="0 0 11 11" className="mb-[1px] ml-[15px] self-end" fill="#b8b8b8"><path d="M8 0h3v3H8zM4 4h3v3H4zM8 4h3v3H8zM0 8h3v3H0zM4 8h3v3H4zM8 8h3v3H8z" /></svg>
    </div>
  );
}

export default function App() {
  return (
    <div className="relative flex h-[1042px] w-[1497px] flex-col overflow-hidden border border-[#6b6b6f] bg-[#f0f0f0] font-['Open_Sans','Noto_Sans',sans-serif] text-[16px] leading-none text-black [font-stretch:90%]">
      <TitleBar />
      <MenuBar />
      <div className="flex min-h-0 flex-1">
        <Toolbar />
        <LayersPanel />
        <div className="ml-[6px] flex-1 overflow-hidden border border-[#868b92]">
          <MapCanvas />
        </div>
      </div>
      <StatusBar />
      <div className="absolute -left-px -top-px"><LayerMenu /><AddMenu /></div>
    </div>
  );
}
